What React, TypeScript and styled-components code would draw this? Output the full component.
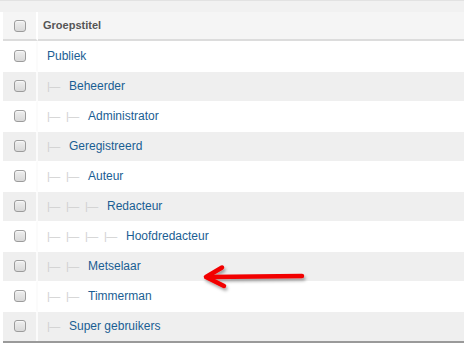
import React from "react";
import styled, { createGlobalStyle } from "styled-components";

const GlobalStyle = createGlobalStyle`
  html, body {
    margin: 0;
    padding: 0;
    background: #ffffff;
  }
  body {
    font-family: "Liberation Sans", Arial, sans-serif;
  }
`;

type Group = { title: string; level: number };

const groups: Group[] = [
  { title: "Publiek", level: 0 },
  { title: "Beheerder", level: 1 },
  { title: "Administrator", level: 2 },
  { title: "Geregistreerd", level: 1 },
  { title: "Auteur", level: 2 },
  { title: "Redacteur", level: 3 },
  { title: "Hoofdredacteur", level: 4 },
  { title: "Metselaar", level: 2 },
  { title: "Timmerman", level: 2 },
  { title: "Super gebruikers", level: 1 },
];

const Page = styled.div`
  position: relative;
  width: 464px;
  height: 347px;
  overflow: hidden;
`;

const TopBand = styled.div`
  height: 11px;
  background: #f1f1f1;
  border-top: 1px solid #e2e2e2;
`;

const Table = styled.table`
  margin-left: 3px;
  width: 461px;
  border-collapse: separate;
  border-spacing: 0;
  border-bottom: 2px solid #9a9a9a;
  table-layout: fixed;
`;

const HeadCell = styled.th<{ $narrow?: boolean }>`
  height: 29px;
  padding: 0 0 ${(p) => (p.$narrow ? 1 : 2)}px ${(p) => (p.$narrow ? 0 : 5)}px;
  width: ${(p) => (p.$narrow ? "35px" : "auto")};
  background: #f5f5f5;
  border-bottom: 2px solid #dcdcdc;
  border-right: ${(p) => (p.$narrow ? "2px solid #ffffff" : "0")};
  text-align: ${(p) => (p.$narrow ? "center" : "left")};
  font-size: 11px;
  font-weight: bold;
  color: #555555;
  vertical-align: middle;
  box-sizing: border-box;
`;

const Row = styled.tr<{ $striped: boolean }>`
  background: ${(p) => (p.$striped ? "#efefef" : "#ffffff")};
`;

const Cell = styled.td<{ $narrow?: boolean }>`
  height: 30px;
  padding: 0 0 ${(p) => (p.$narrow ? 2 : 3)}px ${(p) => (p.$narrow ? 0 : 9)}px;
  border-top: 1px solid #ffffff;
  border-right: ${(p) => (p.$narrow ? "2px solid #fbfbfb" : "0")};
  text-align: ${(p) => (p.$narrow ? "center" : "left")};
  vertical-align: middle;
  box-sizing: border-box;
  white-space: nowrap;
`;

const Box = styled.span`
  display: inline-block;
  width: 12px;
  height: 12px;
  box-sizing: border-box;
  border: 1px solid #9c9c9c;
  border-radius: 3px;
  background: linear-gradient(#eeeeee, #d9d9d9);
  box-shadow: inset 0 1px 1px rgba(255, 255, 255, 0.7);
  vertical-align: middle;
`;

const Title = styled.span`
  display: inline-flex;
  align-items: center;
`;

const Guide = styled.span`
  display: inline-block;
  width: 19px;
  font-size: 11px;
  line-height: 12px;
  color: #d0d0d0;
  letter-spacing: -0.5px;
`;

const Guides = styled.span`
  display: inline-flex;
  margin-right: 3px;
`;

const Link = styled.a`
  font-size: 12px;
  color: #1a5e93;
  text-decoration: none;
`;

const Arrow = styled.svg`
  position: absolute;
  left: 196px;
  top: 258px;
  overflow: visible;
`;

export default function App() {
  return (
    <Page>
      <GlobalStyle />
      <TopBand />
      <Table>
        <thead>
          <tr>
            <HeadCell $narrow>
              <Box />
            </HeadCell>
            <HeadCell>Groepstitel</HeadCell>
          </tr>
        </thead>
        <tbody>
          {groups.map((g, i) => (
            <Row key={g.title} $striped={i % 2 === 1}>
              <Cell $narrow>
                <Box />
              </Cell>
              <Cell>
                <Title>
                  {g.level > 0 && (
                    <Guides>
                      {Array.from({ length: g.level }, (_, k) => (
                        <Guide key={k}>|—</Guide>
                      ))}
                    </Guides>
                  )}
                  <Link href="#">{g.title}</Link>
                </Title>
              </Cell>
            </Row>
          ))}
        </tbody>
      </Table>
      <Arrow width="120" height="40" viewBox="0 0 120 40">
        <defs>
          <filter id="arrowShadow" x="-20%" y="-50%" width="140%" height="200%">
            <feDropShadow dx="1.5" dy="2.5" stdDeviation="1.6" floodColor="#000" floodOpacity="0.35" />
          </filter>
        </defs>
        <g
          filter="url(#arrowShadow)"
          fill="none"
          stroke="#f20000"
          strokeWidth="4.5"
          strokeLinecap="round"
          strokeLinejoin="round"
        >
          <path d="M106 18 L14 19" />
          <path d="M26 9.5 L10 19 L28 28" />
        </g>
      </Arrow>
    </Page>
  );
}
